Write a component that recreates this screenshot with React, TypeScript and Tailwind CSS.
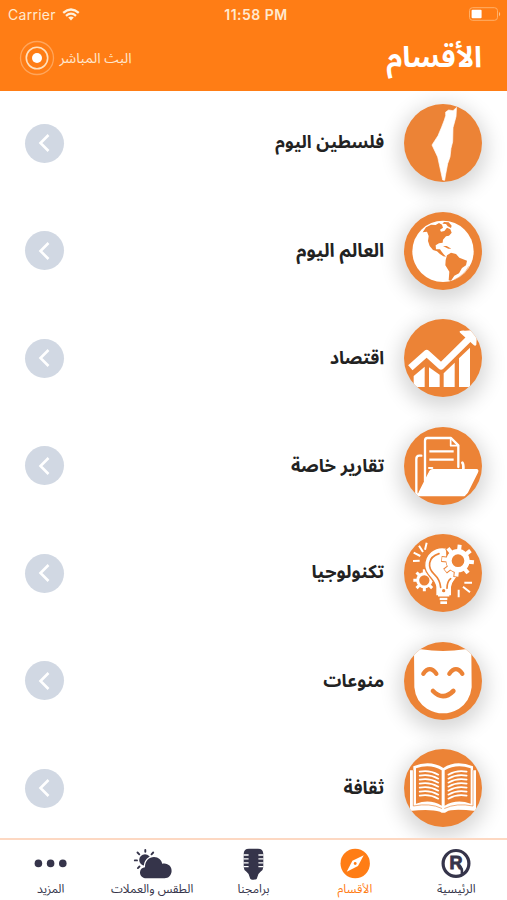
import type { ReactNode } from "react";

type Section = {
  title: string;
  icon: ReactNode;
  size: string;
};

// ============================
// Section icons
// ============================
const GEAR_TEETH = [0, 45, 90, 135, 180, 225, 270, 315];

function Disc({ children }: { children: ReactNode }) {
  return (
    <svg
      viewBox="73 35 234 234"
      className="size-[78px] shrink-0 rounded-full bg-[#ec8336] shadow-[0_6px_20px_5px_rgba(0,0,0,0.16)]"
      fill="none"
      stroke="#fff"
      strokeLinecap="round"
      strokeLinejoin="round"
    >
      {children}
    </svg>
  );
}

function PalestineIcon() {
  return (
    <Disc>
      <path
        fill="#fff"
        strokeWidth="2"
        d="M230 46 L220 55 L207 53 L198 59 L198 70 L194 83 L186 104 L175 130 L157 158 L174 194 L189 263 L195 264 L197 251 L204 214 L211 194 L214 168 L219 148 L220 106 L229 73 Z"
      />
    </Disc>
  );
}

function GlobeIcon() {
  return (
    <Disc>
      <circle cx="190" cy="153" r="92" fill="#fff" stroke="none" />
      <g fill="#ec8336" stroke="none">
        <path d="M139 81 L154 73 L168 74 L178 68 L187 73 L190 82 L181 88 L184 94 L194 92 L202 82 L212 87 L216 97 L208 106 L199 108 L190 118 L189 127 L178 129 L168 135 L169 147 L181 147 L185 153 L192 162 L199 169 L191 168 L180 160 L172 153 L160 149 L150 137 L145 122 L147 107 L142 94 L129 96 Z" />
        <path d="M193 65 L207 66 L216 76 L214 83 L204 78 L199 71 L188 70 Z" />
        <path d="M190 137 L201 137 L215 145 L206 145 Z" />
        <path d="M202 165 L214 157 L229 161 L239 172 L262 181 L259 195 L247 203 L238 219 L224 226 L214 241 L207 240 L209 214 L197 195 L198 179 Z" />
      </g>
      <path stroke="#ec8336" strokeWidth="1.5" d="M223 239 Q252 226 267 199" />
    </Disc>
  );
}

function EconomyIcon() {
  return (
    <Disc>
      <g fill="#fff" stroke="none">
        <path d="M102 206 L135 178 V239 H102 Z" />
        <path d="M148 180 L180 202 V239 H148 Z" />
        <path d="M192 198 L225 166 V239 H192 Z" />
        <path d="M238 153 L271 121 V239 H238 Z" />
        <path d="M240 72 Q245 69 256 70 L285 68 Q292 68 292 77 L290 112 Q287 118 282 113 L243 78 Q239 75 240 72 Z" />
      </g>
      <path strokeWidth="20" strokeLinecap="butt" d="M92 181 L141 138 L184 177 L272 90" />
    </Disc>
  );
}

function ReportsIcon() {
  return (
    <Disc>
      <path strokeWidth="7" d="M125 121 H119 Q110 121 110 131 V233 Q110 239 118 239 H254" />
      <path strokeWidth="7" d="M136 198 V76 Q136 68 143 68 H214 L236 90 V155" />
      <path strokeWidth="5" d="M213 68 V91 H236" />
      <path strokeWidth="7" strokeLinecap="butt" d="M149 108 H222 M149 133 H222" />
      <path strokeWidth="8" d="M248 142 Q252 147 251 162" />
      <path
        fill="#fff"
        strokeWidth="6"
        d="M160 164 H291 Q295 165 292 171 L262 231 Q257 239 249 239 H119 Q115 239 119 233 L150 171 Q153 164 160 164 Z"
      />
      <path strokeWidth="6" d="M148 158 H158" />
    </Disc>
  );
}

function TechIcon() {
  return (
    <Disc>
      {/* small gear */}
      <g transform="translate(134 174)">
        <circle r="20" strokeWidth="9" />
        {GEAR_TEETH.map((a) => (
          <path key={a} transform={`rotate(${a})`} strokeWidth="9" strokeLinecap="butt" d="M0 -22 V-33" />
        ))}
      </g>

      {/* bulb */}
      <path
        fill="#fff"
        stroke="#ec8336"
        strokeWidth="4"
        d="M201 77 C164 69 135 96 135 130 C135 158 166 169 168 194 V221 H216 V194 C218 177 229 171 236 158 L202 106 Z"
      />
      <path stroke="#ec8336" strokeWidth="5" d="M178 94 C143 105 143 137 164 156 Q181 172 183 195" />
      <path stroke="#ec8336" strokeWidth="5" d="M202 198 Q202 178 213 169" />
      <circle cx="192" cy="205" r="5" fill="#ec8336" stroke="none" />
      <path strokeWidth="8" strokeLinecap="butt" d="M175 219 H209 M180 230 H203 M182 241 H202" />
      <path stroke="#ec8336" strokeWidth="2" d="M172 224 H212 M178 235 H206" />

      {/* large gear */}
      <g transform="translate(235 115)">
        <circle r="37" fill="#ec8336" stroke="none" />
        {GEAR_TEETH.map((a) => (
          <g key={a} transform={`rotate(${a + 6})`} strokeLinecap="butt">
            <path stroke="#ec8336" strokeWidth="18" d="M0 -30 V-50" />
            <path strokeWidth="12" d="M0 -30 V-48" />
          </g>
        ))}
        <circle r="27" strokeWidth="16" />
      </g>

      <path
        strokeWidth="6"
        strokeLinecap="butt"
        d="M118 70 L130 89 M141 61 L136 82 M102 91 L122 101 M100 116 L120 115 M254 181 H277 M250 193 L271 210 M237 202 V225"
      />
    </Disc>
  );
}

function MaskIcon() {
  return (
    <Disc>
      <path
        fill="#fff"
        stroke="none"
        d="M103 62 Q112 55 124 57 Q190 67 256 57 Q268 54 275 62 L276 171 Q271 214 238 235 Q190 263 142 235 Q108 214 104 171 Z"
      />
      <g stroke="#ec8336" strokeWidth="13">
        <path d="M131 130 Q150 103 170 130" />
        <path d="M209 130 Q229 103 248 130" />
        <path strokeWidth="14" d="M160 182 Q190 213 221 182" />
      </g>
    </Disc>
  );
}

function BookIcon() {
  const lines = [103, 115, 127, 139, 151, 163, 175];
  return (
    <Disc>
      <path
        fill="#fff"
        stroke="none"
        d="M91 99 H101 V87 Q151 67 191 92 Q229 67 280 87 V99 H289 V221 Q216 213 201 223 Q191 230 181 223 Q151 214 91 221 Z"
      />
      <path
        fill="#ec8336"
        stroke="none"
        d="M109 93 Q151 78 186 99 V205 Q151 184 109 199 Z M195 99 Q231 78 273 93 V199 Q231 184 195 205 Z"
      />
      <path stroke="#ec8336" strokeWidth="2" d="M101 99 V206 Q151 196 186 213 M280 99 V206 Q231 196 195 213" />
      <g strokeWidth="5">
        {lines.map((y) => (
          <path key={y} d={`M120 ${y} Q149 ${y - 6} 176 ${y + 9} M206 ${y + 9} Q232 ${y - 6} 261 ${y}`} />
        ))}
      </g>
    </Disc>
  );
}

// ============================
// Tab bar icons
// ============================
function MoreIcon() {
  return (
    <svg viewBox="35 848 33 32" className="h-8 w-[33px]" fill="currentColor">
      <circle cx="39.4" cy="863.4" r="3.8" />
      <circle cx="51.6" cy="863.4" r="3.8" />
      <circle cx="63.8" cy="863.4" r="3.8" />
    </svg>
  );
}

function WeatherIcon() {
  return (
    <svg viewBox="134 848 39 32" className="h-8 w-[39px]" fill="currentColor">
      <circle cx="146" cy="860" r="5.8" />
      <path
        stroke="currentColor"
        strokeWidth="1.9"
        strokeLinecap="round"
        d="M146.3 850 V851.8 M138.5 852.5 L140.3 854.3 M154.2 852.5 L152.5 854.3 M135.8 860.4 H138 M138.9 868.1 L140.5 866.5"
      />
      <path
        stroke="#fff"
        strokeWidth="2.4"
        paintOrder="stroke"
        d="M147.5 878.2 C142.7 878.2 140.8 874.8 141 871.9 C141.3 869.2 143.5 867.3 146 867.2 C145.8 860.8 150.2 857 155 857 C159.5 857 162.5 860 163.2 863.7 C169 862.5 173 866.7 172.6 871.2 C172.3 875.4 169.5 878.2 165.6 878.2 Z"
      />
    </svg>
  );
}

function MicIcon() {
  return (
    <svg viewBox="237 848 33 32" className="h-8 w-[33px]">
      <path
        fill="currentColor"
        d="M249 848.8 H258 Q263.3 848.8 263.3 854 V867 Q263.3 870 260.5 871.8 Q257.5 874 257.2 877.5 Q257 879.8 253.5 879.8 Q250 879.8 249.8 877.5 Q249.5 874 246.5 871.8 Q243.7 870 243.7 867 V854 Q243.7 848.8 249 848.8 Z"
      />
      <path
        stroke="#fff"
        strokeWidth="1.3"
        d="M243.5 855 H248.6 M243.5 858.9 H248.6 M243.5 862.8 H248.6 M243.5 866.7 H248.6 M258.4 855 H263.5 M258.4 858.9 H263.5 M258.4 862.8 H263.5 M258.4 866.7 H263.5"
      />
    </svg>
  );
}

function CompassIcon() {
  return (
    <svg viewBox="338.5 848 32 32" className="size-8">
      <circle cx="354.7" cy="863.5" r="14.7" fill="currentColor" />
      <path fill="#fff" d="M363.2 855.2 L357.5 866.1 L346.2 871.8 L351.9 860.8 Z" />
      <circle cx="354.7" cy="863.5" r="1.4" fill="currentColor" />
    </svg>
  );
}

function HomeIcon() {
  return (
    <svg viewBox="440 848 32 32" className="size-8">
      <circle cx="456" cy="863.4" r="12.9" fill="none" stroke="currentColor" strokeWidth="3.2" />
      <text
        x="456"
        y="869.3"
        textAnchor="middle"
        fill="currentColor"
        stroke="currentColor"
        strokeWidth="0.9"
        className="font-['Liberation_Sans',sans-serif] text-[18px] font-bold"
      >
        R
      </text>
      <path fill="none" stroke="currentColor" strokeWidth="2.6" d="M459 865 Q463 869 461.7 874" />
    </svg>
  );
}

const sections: Section[] = [
  { title: "فلسطين اليوم", icon: <PalestineIcon />, size: "text-[17.7px]" },
  { title: "العالم اليوم", icon: <GlobeIcon />, size: "text-[18.7px]" },
  { title: "اقتصاد", icon: <EconomyIcon />, size: "text-[18px]" },
  { title: "تقارير خاصة", icon: <ReportsIcon />, size: "text-[18.2px]" },
  { title: "تكنولوجيا", icon: <TechIcon />, size: "text-[18.4px]" },
  { title: "منوعات", icon: <MaskIcon />, size: "text-[18px]" },
  { title: "ثقافة", icon: <BookIcon />, size: "text-[18px]" },
];

const tabs = [
  { label: "الرئيسية", icon: <HomeIcon />, active: false },
  { label: "الأقسام", icon: <CompassIcon />, active: true },
  { label: "برامجنا", icon: <MicIcon />, active: false },
  { label: "الطقس والعملات", icon: <WeatherIcon />, active: false },
  { label: "المزيد", icon: <MoreIcon />, active: false },
];

function StatusBar() {
  return (
    <div
      dir="ltr"
      className="grid h-7 grid-cols-3 items-center pl-2 pr-[6px] font-[Inter,sans-serif] text-[14px] text-[#ffe9cf]"
    >
      <div className="flex items-center gap-[6px]">
        <span className="tracking-[0.02em]">Carrier</span>
        <svg viewBox="0 0 18 13" className="h-[13px] w-[18px]" fill="none" stroke="#fff1dd" strokeWidth="2.3">
          <path d="M1.2 4.9 Q9 -1.9 16.8 4.9" />
          <path d="M4 7.8 Q9 3.5 14 7.8" />
          <path fill="#fff1dd" stroke="none" d="M6.2 9.5 Q9 7.3 11.8 9.5 L9 12.5 Z" />
        </svg>
      </div>
      <span className="whitespace-nowrap pl-[3px] text-center font-semibold tracking-[0.035em]">11:58 PM</span>
      <svg viewBox="0 0 33 14" className="h-[14px] w-[33px] justify-self-end">
        <rect x="1.5" y="0.7" width="28" height="12.6" rx="3" fill="none" stroke="#ffb068" strokeWidth="1" />
        <rect x="3.6" y="2.7" width="10" height="8.6" rx="1" fill="#fff" />
        <path d="M31 4.7 Q33.4 7 31 9.3 Z" fill="#ffc38c" />
      </svg>
    </div>
  );
}

function LiveButton() {
  return (
    <button className="flex items-center gap-[5px] text-[14.2px] text-[#ffe6cc]">
      <span className="whitespace-nowrap leading-5">البث المباشر</span>
      <svg viewBox="0 0 36 36" className="size-9" fill="none">
        <circle cx="18" cy="18" r="16.5" stroke="#ffa55b" strokeWidth="1.3" />
        <circle cx="18" cy="18" r="10.7" stroke="#ffe0bd" strokeWidth="1.6" />
        <circle cx="18" cy="18" r="5" fill="#fff" />
      </svg>
    </button>
  );
}

export default function App() {
  return (
    <div
      dir="rtl"
      className="flex h-[900px] w-[507px] flex-col overflow-hidden bg-white font-['Noto_Sans_Arabic','Noto_Sans','DejaVu_Sans',sans-serif]"
    >
      <header className="h-[91px] shrink-0 bg-[#ff7d15]">
        <StatusBar />
        <div className="flex h-[60px] items-center justify-between pl-[18.5px] pr-[25px]">
          <h1 className="whitespace-nowrap text-[29px] font-bold leading-[44px] text-white">الأقسام</h1>
          <LiveButton />
        </div>
      </header>

      <main className="h-[747px] shrink-0 overflow-hidden">
        {sections.map((s) => (
          <div key={s.title} className="flex h-[107.5px] items-start pl-[25.4px] pr-[24.8px] pt-[13.2px]">
            {s.icon}
            <div className="mr-5 flex h-[78px] flex-1 items-center justify-between">
              <h2 className={`whitespace-nowrap font-bold leading-6 text-[#222] ${s.size}`}>{s.title}</h2>
              <span className="flex size-[39px] items-center justify-center rounded-full bg-[#d1d8e3]">
                <svg viewBox="0 0 12 20" className="mr-[2px] h-5 w-3" fill="none" stroke="#fff" strokeWidth="2.6">
                  <path d="M10.5 2 L2.5 10 L10.5 18" />
                </svg>
              </span>
            </div>
          </div>
        ))}
      </main>

      <nav className="flex h-[62px] shrink-0 border-t-[2.5px] border-[#fdd8c2] bg-white">
        {tabs.map((t) => (
          <button
            key={t.label}
            className={`flex flex-1 basis-0 flex-col items-center pt-[7.5px] text-[12px] ${
              t.active ? "text-[#ff7d15]" : "text-[#35344a]"
            }`}
          >
            {t.icon}
            <span className="whitespace-nowrap leading-[19px]">{t.label}</span>
          </button>
        ))}
      </nav>
    </div>
  );
}
